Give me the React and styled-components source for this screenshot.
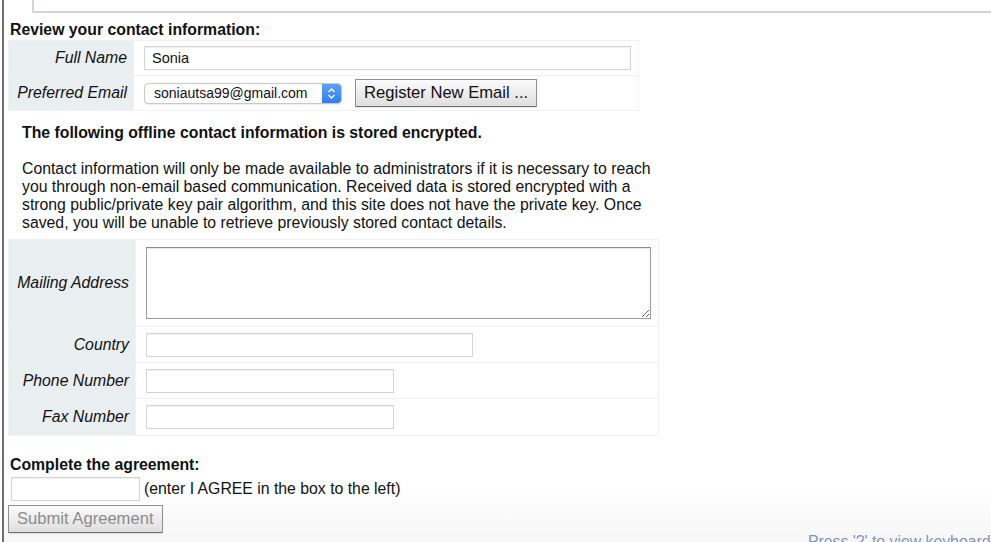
import styled, { createGlobalStyle } from "styled-components";

const GlobalStyle = createGlobalStyle`
  html, body {
    margin: 0;
    padding: 0;
    background: #fff;
    overflow: hidden;
  }
  body {
    font-family: "Liberation Sans", Arial, sans-serif;
    font-size: 15.8px;
    color: #111;
  }
`;

const Page = styled.div`
  margin-left: 2px;
  border-left: 2px solid #6e6e6e;
  padding-left: 4px;
  min-height: 100vh;
  box-sizing: border-box;
  background: linear-gradient(to bottom, #fff 0%, #fff 88%, #f5f5f5 100%);
`;

const TopBox = styled.div`
  margin-left: 24px;
  height: 11px;
  border-left: 2px solid #cfd4de;
  border-bottom: 2px solid #cfd4de;
`;

const SectionTitle = styled.h3`
  margin: ${(p) => p.$top || 8}px 0 0 2px;
  font-size: 15.8px;
  line-height: 18px;
  font-weight: bold;
`;

const FormTable = styled.table`
  width: ${(p) => p.$width}px;
  border-collapse: collapse;
  margin-top: ${(p) => p.$top || 0}px;

  td {
    border: 1px solid #eef2f4;
    padding: 0;
  }
`;

const Label = styled.td`
  width: ${(p) => p.$width}px;
  height: ${(p) => p.$height}px;
  background: #e9eef1;
  text-align: right;
  font-style: italic;
  white-space: nowrap;
  padding-right: 6px !important;
  box-sizing: border-box;
`;

const Field = styled.td`
  padding-left: 10px !important;
`;

const TextInput = styled.input`
  display: block;
  width: ${(p) => p.$width}px;
  height: 24px;
  box-sizing: border-box;
  border: 1px solid #d3d3d3;
  box-shadow: inset 0 1px 1px rgba(0, 0, 0, 0.06);
  font-family: "Liberation Sans", Arial, sans-serif;
  font-size: 14.5px;
  padding: 0 7px;
  color: #111;
  outline: none;
`;

const TextArea = styled.textarea`
  display: block;
  width: 505px;
  height: 72px;
  box-sizing: border-box;
  border: 1px solid #9a9a9a;
  border-top-color: #8a8a8a;
  box-shadow: inset 0 1px 1px rgba(0, 0, 0, 0.1);
  resize: both;
  outline: none;
`;

const EmailRow = styled.div`
  display: flex;
  align-items: center;
  gap: 13px;
`;

const SelectBox = styled.div`
  display: flex;
  align-items: center;
  width: 198px;
  height: 21px;
  box-sizing: border-box;
  border: 1px solid #c9c9c9;
  border-radius: 4px;
  background: #fff;
  box-shadow: 0 1px 1px rgba(0, 0, 0, 0.08);
  overflow: hidden;
  font-size: 14px;
`;

const SelectText = styled.span`
  flex: 1;
  padding-left: 9px;
  color: #111;
  white-space: nowrap;
`;

const SelectArrow = styled.span`
  width: 19px;
  height: 100%;
  display: flex;
  align-items: center;
  justify-content: center;
  background: linear-gradient(#5aa2f7, #2f7ef2);
  border-radius: 0 3px 3px 0;
`;

const Button = styled.button`
  height: 28px;
  padding: 0 ${(p) => p.$pad || 8}px;
  font-family: "Liberation Sans", Arial, sans-serif;
  font-size: 16.6px;
  color: ${(p) => (p.$disabled ? "#8c8c8c" : "#111")};
  background: linear-gradient(#fbfbfb, #dedede);
  border: 1px solid #8f8f8f;
  border-bottom-color: #6f6f6f;
  border-radius: 1px;
  box-shadow: 0 1px 1px rgba(0, 0, 0, 0.1);
  white-space: nowrap;
`;

const Notice = styled.div`
  padding: 0 0 0 14px;
  margin-top: 13px;
`;

const NoticeTitle = styled.div`
  font-weight: bold;
  line-height: 18px;
`;

const NoticeText = styled.p`
  margin: 18px 0 0 0;
  line-height: 18px;
  white-space: nowrap;
`;

const AgreeRow = styled.div`
  display: flex;
  align-items: center;
  gap: 4px;
  margin: 3px 0 0 3px;
`;

const SubmitRow = styled.div`
  margin-top: 4px;
`;

const Footer = styled.div`
  padding-left: 800px;
  white-space: nowrap;
  color: #8393c0;
  font-size: 15.8px;
`;

function Arrows() {
  return (
    <svg width="9" height="13" viewBox="0 0 9 13" fill="none">
      <path d="M1.5 5 L4.5 2 L7.5 5" stroke="#fff" strokeWidth="1.4" />
      <path d="M1.5 8 L4.5 11 L7.5 8" stroke="#fff" strokeWidth="1.4" />
    </svg>
  );
}

export default function App() {
  return (
    <>
      <GlobalStyle />
      <Page>
        <TopBox />
        <SectionTitle>Review your contact information:</SectionTitle>
        <FormTable $width={631} $top={1}>
          <tbody>
            <tr>
              <Label $width={125} $height={35}>Full Name</Label>
              <Field>
                <TextInput $width={487} defaultValue="Sonia" />
              </Field>
            </tr>
            <tr>
              <Label $width={125} $height={35}>Preferred Email</Label>
              <Field>
                <EmailRow>
                  <SelectBox>
                    <SelectText>soniautsa99@gmail.com</SelectText>
                    <SelectArrow>
                      <Arrows />
                    </SelectArrow>
                  </SelectBox>
                  <Button>Register New Email ...</Button>
                </EmailRow>
              </Field>
            </tr>
          </tbody>
        </FormTable>

        <Notice>
          <NoticeTitle>The following offline contact information is stored encrypted.</NoticeTitle>
          <NoticeText>
            Contact information will only be made available to administrators if it is necessary to reach
            <br />
            you through non-email based communication. Received data is stored encrypted with a
            <br />
            strong public/private key pair algorithm, and this site does not have the private key. Once
            <br />
            saved, you will be unable to retrieve previously stored contact details.
          </NoticeText>
        </Notice>

        <FormTable $width={651} $top={7}>
          <tbody>
            <tr>
              <Label $width={127} $height={87}>Mailing Address</Label>
              <Field>
                <TextArea />
              </Field>
            </tr>
            <tr>
              <Label $width={127} $height={36}>Country</Label>
              <Field>
                <TextInput $width={327} />
              </Field>
            </tr>
            <tr>
              <Label $width={127} $height={36}>Phone Number</Label>
              <Field>
                <TextInput $width={248} />
              </Field>
            </tr>
            <tr>
              <Label $width={127} $height={37}>Fax Number</Label>
              <Field>
                <TextInput $width={248} />
              </Field>
            </tr>
          </tbody>
        </FormTable>

        <SectionTitle $top={20}>Complete the agreement:</SectionTitle>
        <AgreeRow>
          <TextInput $width={129} />
          <span>(enter I AGREE in the box to the left)</span>
        </AgreeRow>
        <SubmitRow>
          <Button $disabled $pad={8}>Submit Agreement</Button>
        </SubmitRow>
        <Footer>Press '?' to view keyboard</Footer>
      </Page>
    </>
  );
}
